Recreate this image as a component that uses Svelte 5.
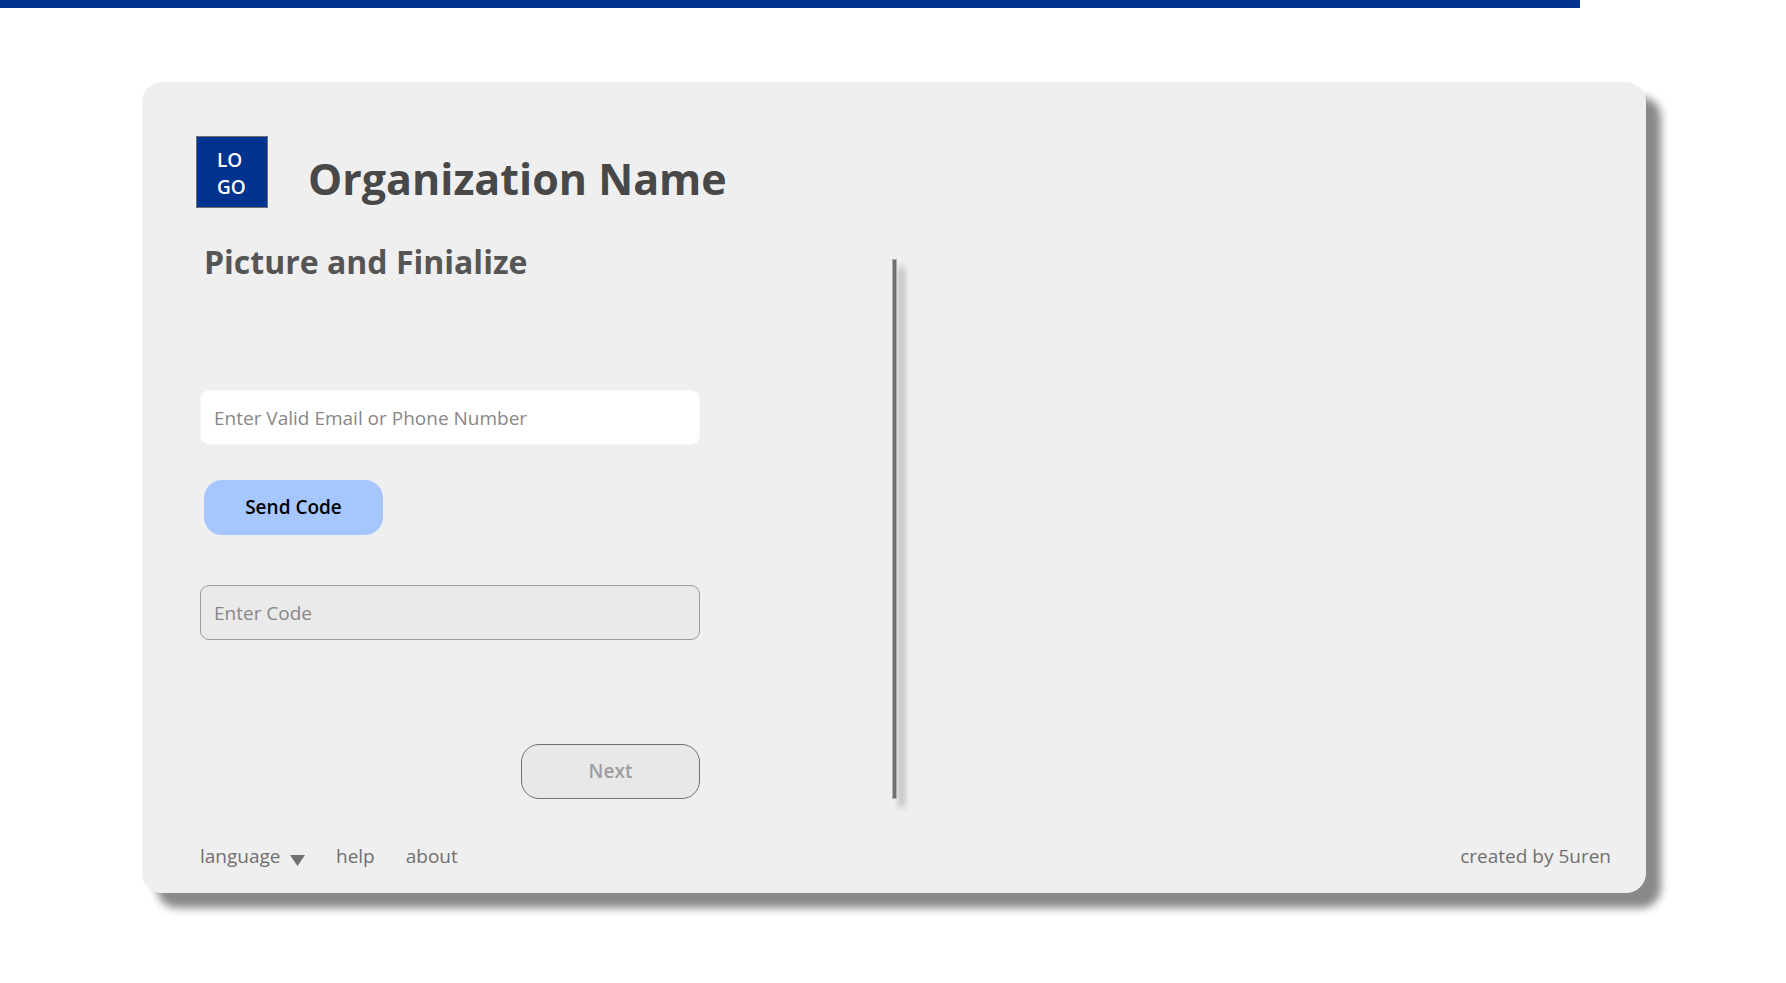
<script>
  let contact = $state('');
  let code = $state('');
  let language = $state('language');
</script>

<div class="progress"></div>

<main class="card">
  <header class="brand">
    <div class="logo">LO<br />GO</div>
    <h1>Organization Name</h1>
  </header>

  <div class="content">
    <form class="panel" onsubmit={(e) => e.preventDefault()}>
      <h2>Picture and Finialize</h2>
      <input class="field contact" type="text" aria-label="Email or phone" placeholder="Enter Valid Email or Phone Number" bind:value={contact} />
      <button class="action send" type="button">Send Code</button>
      <input class="field code" type="text" aria-label="Code" placeholder="Enter Code" bind:value={code} />
      <button class="action next" type="submit">Next</button>
    </form>
    <div class="divider"></div>
    <section class="side"></section>
  </div>

  <footer class="footer">
    <label class="language">
      <select aria-label="Language" bind:value={language}>
        <option value="language">language</option>
      </select>
      <svg width="15" height="11" viewBox="0 0 15 11" aria-hidden="true"><path d="M0 0H15L7.5 11Z" fill="#707070" /></svg>
    </label>
    <a class="help" href="#help">help</a>
    <a class="about" href="#about">about</a>
    <span class="credit">created by 5uren</span>
  </footer>
</main>

<style>
  :global(body) {
    margin: 0;
    background: #fff;
    font-family: 'Open Sans', 'Noto Sans', sans-serif;
    font-size: 19px;
    line-height: 27px;
  }
  .progress {
    height: 8px;
    margin-right: 206px;
    background: #00338f;
  }
  .card {
    margin: 74px 140px 90px 142px;
    padding-top: 54px;
    border-radius: 20px;
    background: #efefef;
    box-shadow: 15px 15px 8px #898989;
  }
  .brand {
    display: flex;
    align-items: center;
    gap: 40px;
    padding-left: 54px;
  }
  .logo {
    box-sizing: border-box;
    width: 72px;
    height: 72px;
    padding: 10px 0 0 20px;
    border: 1px solid #707070;
    background: #00338f;
    color: #fff;
    font-weight: 600;
  }
  h1 {
    margin: 14px 0 0;
    font-size: 43px;
    line-height: 58px;
    font-weight: 700;
    color: #484848;
  }
  .content {
    display: grid;
    grid-template-columns: 1fr 5px 1fr;
    margin-top: 34px;
  }
  .panel {
    display: flex;
    flex-direction: column;
    align-items: flex-start;
    width: 500px;
    padding-left: 58px;
  }
  h2 {
    margin: 0 0 108px 4px;
    font-size: 32px;
    line-height: 40px;
    font-weight: 700;
    color: #555;
  }
  .field {
    box-sizing: border-box;
    width: 100%;
    height: 55px;
    padding: 0 13px;
    border: 1px solid #f7f7f7;
    border-radius: 9px;
    background: #fff;
    font: inherit;
    color: #484848;
  }
  .field::placeholder {
    color: #8a8686;
    opacity: 1;
  }
  .code {
    border-color: #9b9b9b;
    background: #eaeaea;
  }
  .action {
    box-sizing: border-box;
    width: 179px;
    height: 55px;
    padding: 0;
    border: 0;
    border-radius: 18px;
    font: inherit;
    font-weight: 600;
  }
  .send {
    margin: 35px 0 50px 4px;
    background: #a6c6ff;
    color: #000;
  }
  .next {
    align-self: flex-end;
    margin-top: 104px;
    border: 1px solid #707070;
    background: #e8e8e8;
    color: #9d9d9d;
  }
  .divider {
    box-sizing: border-box;
    margin-top: 17px;
    border: 1px solid #b0b0b0;
    background: #707070;
    box-shadow: 7px 8px 6px #b0b0b0;
  }
  .footer {
    display: flex;
    align-items: center;
    padding: 44px 35px 23px 58px;
    color: #707070;
  }
  .language {
    display: flex;
    align-items: center;
    gap: 9px;
  }
  .language svg {
    margin-top: 7px;
  }
  select {
    appearance: none;
    padding: 0;
    border: 0;
    background: none;
    font: inherit;
    color: inherit;
  }
  a {
    color: inherit;
    text-decoration: none;
  }
  .help,
  .about {
    margin-left: 31px;
  }
  .credit {
    margin-left: auto;
  }
</style>
